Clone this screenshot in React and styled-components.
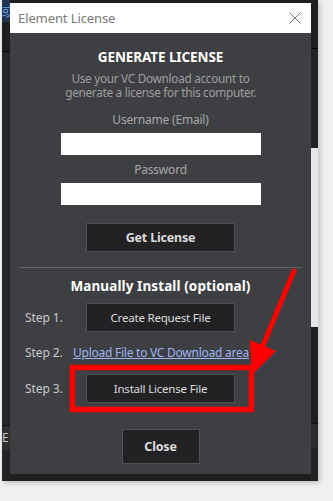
import styled, { createGlobalStyle } from "styled-components";

const GlobalStyle = createGlobalStyle`
  html, body {
    margin: 0;
    background: #f0f0f0;
    font-family: "Noto Sans", "Open Sans", sans-serif;
  }
`;

const Page = styled.div`
  position: relative;
  width: 333px;
  height: 501px;
  overflow: hidden;
`;

const BackWindow = styled.div`
  margin-left: 2px;
  width: 316px;
  height: 481px;
  background: #1f1f1f;
  display: flex;
  box-shadow: 2px 2px 5px rgba(0, 0, 0, 0.2);
`;

const Strip = styled.div`
  width: ${(p) => p.$w}px;
  display: flex;
  flex-direction: column;
  overflow: hidden;
`;

const StripPart = styled.div`
  height: ${(p) => p.$h}px;
  flex: ${(p) => (p.$grow ? 1 : "none")};
  background: ${(p) => p.$bg || "transparent"};
  border-top: ${(p) => (p.$line ? `1px solid ${p.$line}` : "none")};
  color: ${(p) => p.$color || "#aaa"};
  font-size: ${(p) => p.$fs || 12}px;
  line-height: ${(p) => p.$h}px;
  overflow: hidden;
  white-space: nowrap;
`;

const Dialog = styled.div`
  width: 301px;
  margin-top: 3px;
  height: 471px;
  display: flex;
  flex-direction: column;
`;

const TitleBar = styled.div`
  height: 30px;
  background: #ffffff;
  display: flex;
  align-items: center;
  justify-content: space-between;
  padding: 0 10px 0 8px;
`;

const Title = styled.span`
  font-size: 13px;
  color: #7a7a7a;
  letter-spacing: -0.1px;
`;

const CloseX = styled.svg`
  width: 12px;
  height: 12px;
  margin-bottom: 1px;
`;

const Body = styled.div`
  flex: 1;
  background: #3e3f42;
  display: flex;
  flex-direction: column;
  align-items: center;
  padding-top: 16px;
`;

const Heading = styled.div`
  font-size: 13.5px;
  font-weight: 700;
  line-height: 16px;
  color: #ffffff;
  margin-top: ${(p) => p.$mt || 0}px;
  letter-spacing: ${(p) => p.$ls || 0}px;
`;

const Desc = styled.div`
  margin-top: 6px;
  font-size: 11.8px;
  line-height: 14px;
  color: #9e9e9e;
  text-align: center;
  letter-spacing: -0.3px;
`;

const FieldLabel = styled.div`
  margin-top: ${(p) => p.$mt}px;
  font-size: 12px;
  line-height: 16px;
  color: #a8a8a8;
  letter-spacing: -0.2px;
`;

const Input = styled.input`
  margin-top: 5px;
  width: 200px;
  height: 22px;
  box-sizing: border-box;
  border: none;
  background: #ffffff;
  outline: none;
`;

const Button = styled.button`
  margin-top: ${(p) => p.$mt || 0}px;
  width: ${(p) => p.$w || 149}px;
  height: ${(p) => p.$h || 29}px;
  background: #222224;
  border: 1px solid #505054;
  color: #dcdcdc;
  font-family: inherit;
  font-size: ${(p) => (p.$bold ? 12.5 : 11.5)}px;
  font-weight: ${(p) => (p.$bold ? 700 : 400)};
  letter-spacing: -0.2px;
  padding: 0;
  cursor: pointer;
`;

const Separator = styled.hr`
  margin: 15px 0 0;
  width: 283px;
  border: none;
  border-top: 1px solid #616166;
`;

const StepRow = styled.div`
  align-self: stretch;
  display: grid;
  grid-template-columns: 61px 1fr;
  align-items: center;
  padding-left: 15px;
  margin-top: ${(p) => p.$mt}px;
`;

const StepLabel = styled.span`
  font-size: 12px;
  color: #c9c9c9;
  letter-spacing: -0.1px;
`;

const Link = styled.a`
  font-size: 12px;
  line-height: 16px;
  color: #9fb4f2;
  text-decoration: underline;
  margin-left: -13px;
  letter-spacing: -0.25px;
  white-space: nowrap;
`;

const Annotation = styled.svg`
  position: absolute;
  left: 0;
  top: 0;
  pointer-events: none;
`;

export default function App() {
  return (
    <>
      <GlobalStyle />
      <Page>
        <BackWindow>
          <Strip $w={8}>
            <StripPart $h={22} $bg="#22344f" $color="#6fa3e6" $fs={14}>
              或
            </StripPart>
            <StripPart $h={29} $bg="#1e1e1e" />
            <StripPart $h={373} $bg="#262626" $line="#050505" />
            <StripPart $h={24} $bg="#2e2e2e" $line="#111" $color="#c8c8c8" $fs={12}>
              E
            </StripPart>
            <StripPart $grow $bg="#232323" />
          </Strip>
          <Dialog>
            <TitleBar>
              <Title>Element License</Title>
              <CloseX viewBox="0 0 12 12">
                <path d="M0.5 0.5 L11.5 11.5 M11.5 0.5 L0.5 11.5" stroke="#7a7a7a" strokeWidth="1" />
              </CloseX>
            </TitleBar>
            <Body>
              <Heading $ls={-0.1}>GENERATE LICENSE</Heading>
              <Desc>
                Use your VC Download account to
                <br />
                generate a license for this computer.
              </Desc>
              <FieldLabel $mt={13}>Username (Email)</FieldLabel>
              <Input type="email" />
              <FieldLabel $mt={7}>Password</FieldLabel>
              <Input type="password" />
              <Button $mt={18} $bold>
                Get License
              </Button>
              <Separator />
              <Heading $mt={10} $ls={0.1}>
                Manually Install (optional)
              </Heading>
              <StepRow $mt={9}>
                <StepLabel>Step 1.</StepLabel>
                <Button>Create Request File</Button>
              </StepRow>
              <StepRow $mt={12}>
                <StepLabel>Step 2.</StepLabel>
                <Link href="#">Upload File to VC Download area</Link>
              </StepRow>
              <StepRow $mt={13}>
                <StepLabel>Step 3.</StepLabel>
                <Button>Install License File</Button>
              </StepRow>
              <Button $mt={26} $w={78} $h={35} $bold>
                Close
              </Button>
            </Body>
          </Dialog>
          <Strip $w={7}>
            <StripPart $h={48} $bg="#1f1f1f" />
            <StripPart $h={99} $bg="#232323" $line="#050505" />
            <StripPart $h={179} $bg="#e6e6e6" />
            <StripPart $h={96} $bg="#1f1f1f" />
            <StripPart $h={24} $bg="#2b2b2b" $line="#111" />
            <StripPart $grow $bg="#232323" />
          </Strip>
        </BackWindow>
        <Annotation width="333" height="501" viewBox="0 0 333 501">
          <rect x="72.5" y="367.5" width="179" height="42" fill="none" stroke="#ff0000" strokeWidth="5.5" />
          <line x1="294" y1="271" x2="262" y2="348" stroke="#ff0000" strokeWidth="5" strokeLinecap="round" />
          <polygon points="252,375 276,351 250,340" fill="#ff0000" />
        </Annotation>
      </Page>
    </>
  );
}
